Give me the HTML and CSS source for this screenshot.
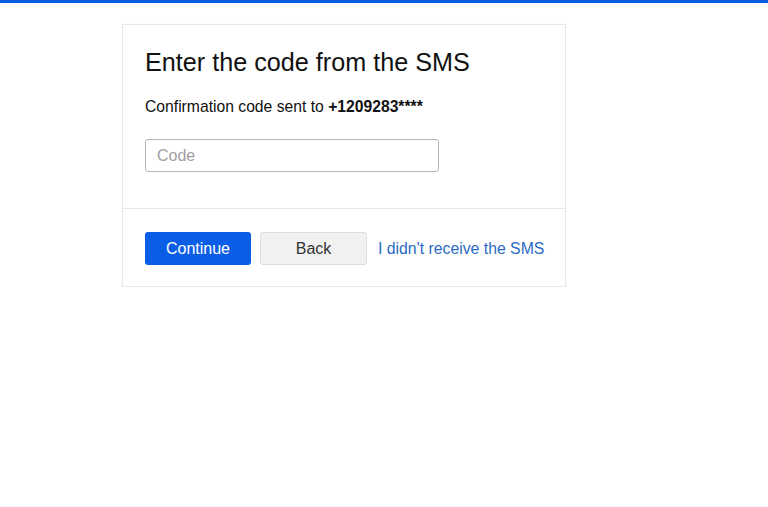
FILE: index.html
```html
<!DOCTYPE html>
<html>
<head>
<meta charset="utf-8">
<link rel="stylesheet" href="styles.css">
</head>
<body>
<div class="topbar"></div>
<div class="card">
  <div class="card-body">
    <h1 class="title">Enter the code from the SMS</h1>
    <p class="subtitle">Confirmation code sent to <b>+1209283****</b></p>
    <input class="code-input" type="text" placeholder="Code">
  </div>
  <div class="card-footer">
    <button class="btn btn-primary">Continue</button>
    <button class="btn btn-secondary">Back</button>
    <a class="link" href="#">I didn't receive the SMS</a>
  </div>
</div>
</body>
</html>
```
FILE: styles.css
```css
html, body {
  margin: 0;
  padding: 0;
  background: #fff;
  font-family: "Liberation Sans", Arial, sans-serif;
  color: #1a1a1a;
}
.topbar {
  height: 3px;
  background: #0a5ee6;
}
.card {
  margin: 21px 0 0 122px;
  width: 442px;
  border: 1px solid #e6e6e6;
  box-shadow: 0 0 2px rgba(0,0,0,0.04);
}
.card-body {
  padding: 21px 22px 36px;
}
.title {
  margin: 0;
  font-size: 25.2px;
  font-weight: normal;
  line-height: 32px;
  color: #111;
}
.subtitle {
  margin: 19px 0 0;
  font-size: 15.7px;
  line-height: 20px;
  color: #111;
}
.subtitle b {
  font-weight: bold;
}
.code-input {
  display: block;
  box-sizing: border-box;
  margin-top: 22px;
  width: 294px;
  height: 33px;
  border: 1px solid #b8b8b8;
  border-radius: 3px;
  padding: 0 11px;
  font-family: "Liberation Sans", Arial, sans-serif;
  font-size: 16px;
  color: #111;
  outline: none;
}
.code-input::placeholder {
  color: #a0a0a0;
}
.card-footer {
  border-top: 1px solid #e6e6e6;
  padding: 23px 22px 21px;
  display: flex;
  align-items: center;
  gap: 9px;
}
.btn {
  flex-shrink: 0;
  box-sizing: border-box;
  height: 33px;
  width: 106px;
  border-radius: 3px;
  font-family: "Liberation Sans", Arial, sans-serif;
  font-size: 16px;
  cursor: pointer;
}
.btn-primary {
  background: #0a5ee6;
  color: #fff;
  border: none;
}
.btn-secondary {
  width: 107px;
  background: #f1f1f1;
  color: #333;
  border: 1px solid #dcdcdc;
}
.link {
  flex-shrink: 0;
  margin-left: 2px;
  font-size: 15.8px;
  color: #2a6ac4;
  text-decoration: none;
  white-space: nowrap;
}
```
